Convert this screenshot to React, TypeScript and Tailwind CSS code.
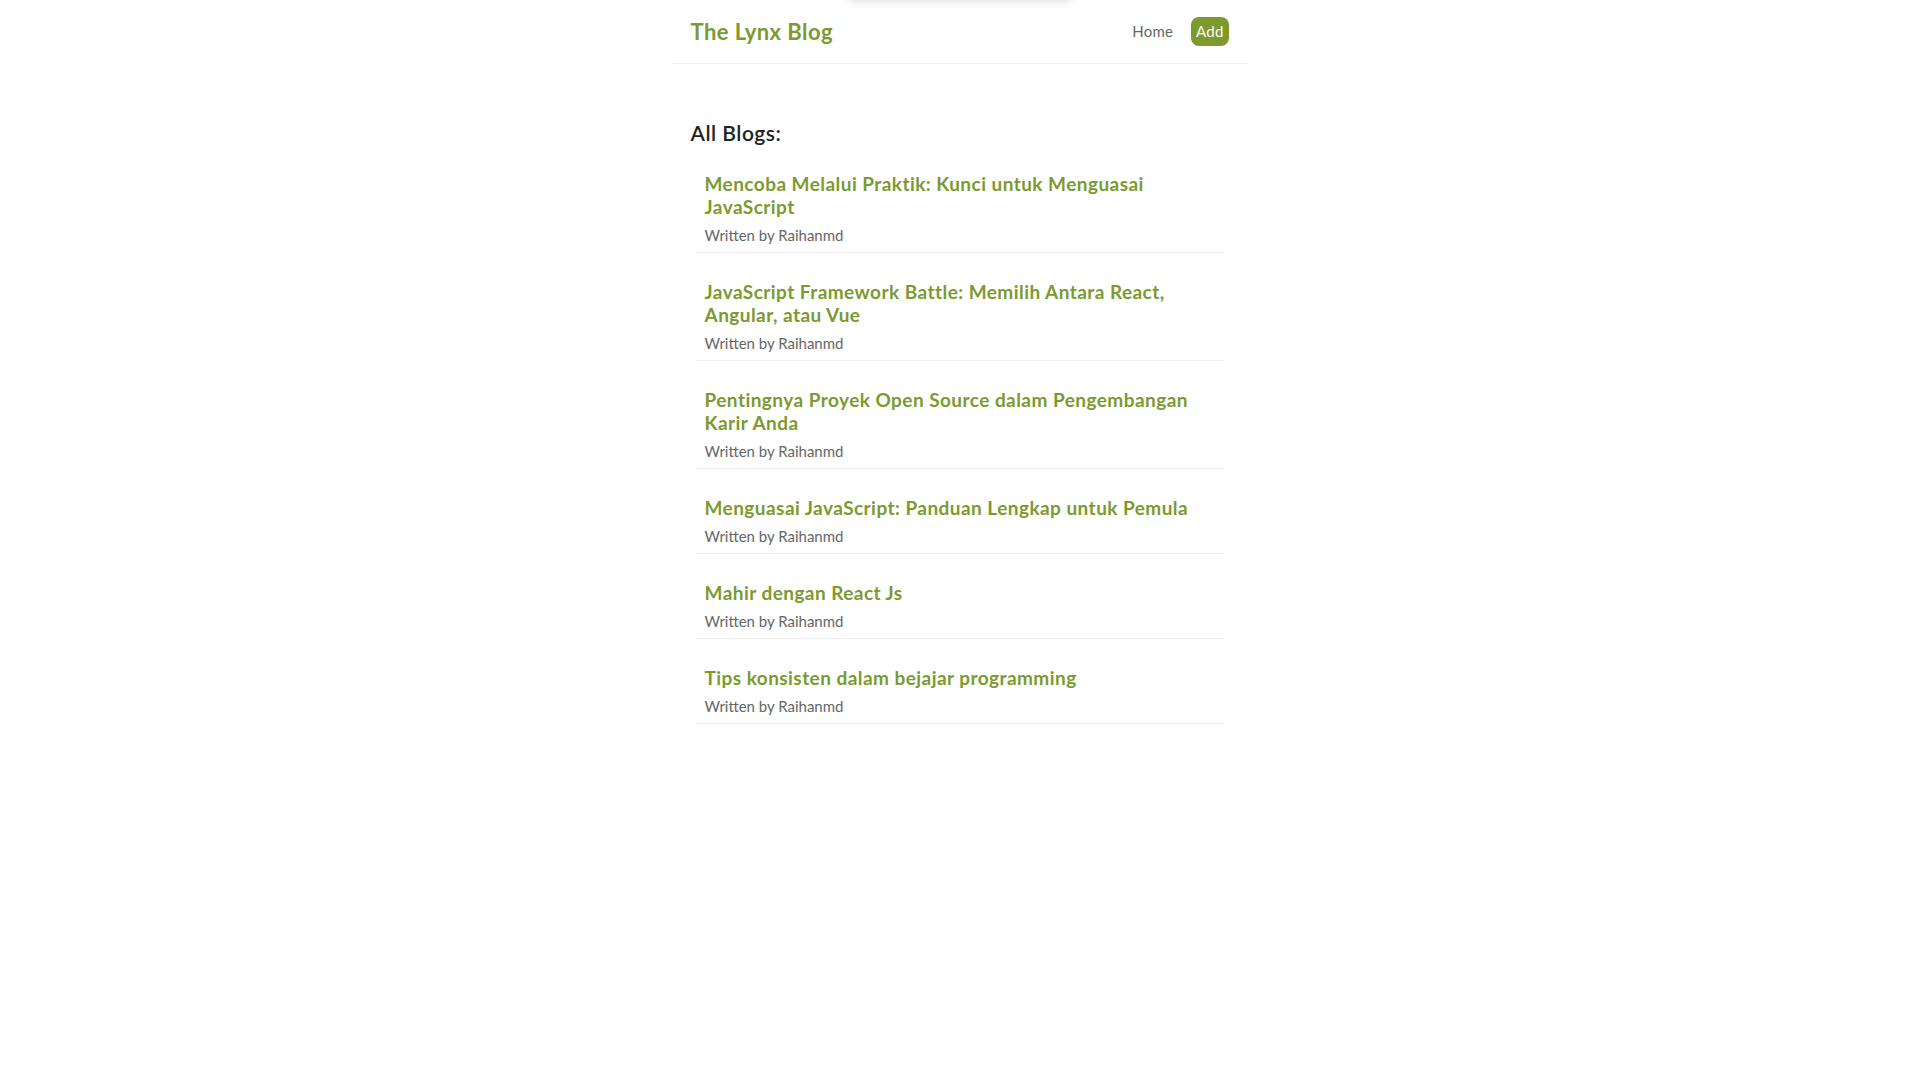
const blogs = [
  { id: 1, title: "Mencoba Melalui Praktik: Kunci untuk Menguasai JavaScript", author: "Raihanmd" },
  { id: 2, title: "JavaScript Framework Battle: Memilih Antara React, Angular, atau Vue", author: "Raihanmd" },
  { id: 3, title: "Pentingnya Proyek Open Source dalam Pengembangan Karir Anda", author: "Raihanmd" },
  { id: 4, title: "Menguasai JavaScript: Panduan Lengkap untuk Pemula", author: "Raihanmd" },
  { id: 5, title: "Mahir dengan React Js", author: "Raihanmd" },
  { id: 6, title: "Tips konsisten dalam bejajar programming", author: "Raihanmd" },
];

function Navbar() {
  return (
    <nav className="relative mx-auto flex h-[64px] w-[576px] items-center border-b border-[#f0f0f0] px-[19px]">
      <div className="absolute left-[176px] top-[-22px] h-[22px] w-[224px] rounded-md bg-white shadow-[0_2px_8px_rgba(0,0,0,0.12)]" />
      <h1 className="text-[22px] font-bold leading-[28px] tracking-[0.45px] text-[#7b9a2f]">The Lynx Blog</h1>
      <div className="ml-auto flex items-center">
        <a href="#" className="p-[6px] text-[15px] leading-[17px] tracking-[0.2px] text-[#666]">
          Home
        </a>
        <a href="#" className="ml-[12px] rounded-[8px] bg-[#7d9b2c] px-[5px] py-[6px] text-[15px] leading-[17px] tracking-[0.2px] text-white">
          Add
        </a>
      </div>
    </nav>
  );
}

function BlogPreview({ title, author }: { title: string; author: string }) {
  return (
    <div className="mx-[5px] mt-[19px] border-b border-[#f0f0f0] px-[9px] pb-[7px] pt-[8px]">
      <h2 className="mb-[7px] text-[19px] font-bold leading-[23px] tracking-[0.45px] text-[#7b9a2f]">{title}</h2>
      <p className="text-[15px] leading-[20px] text-[#666]">Written by {author}</p>
    </div>
  );
}

export default function App() {
  return (
    <div className="min-h-screen bg-white font-['Lato',_'Liberation_Sans',_sans-serif]">
      <Navbar />
      <main className="mx-auto mt-[37px] w-[576px] p-[19px]">
        <h2 className="text-[21px] font-semibold leading-[25px] tracking-[0.5px] text-[#222]">All Blogs:</h2>
        {blogs.map((b) => (
          <BlogPreview key={b.id} title={b.title} author={b.author} />
        ))}
      </main>
    </div>
  );
}
